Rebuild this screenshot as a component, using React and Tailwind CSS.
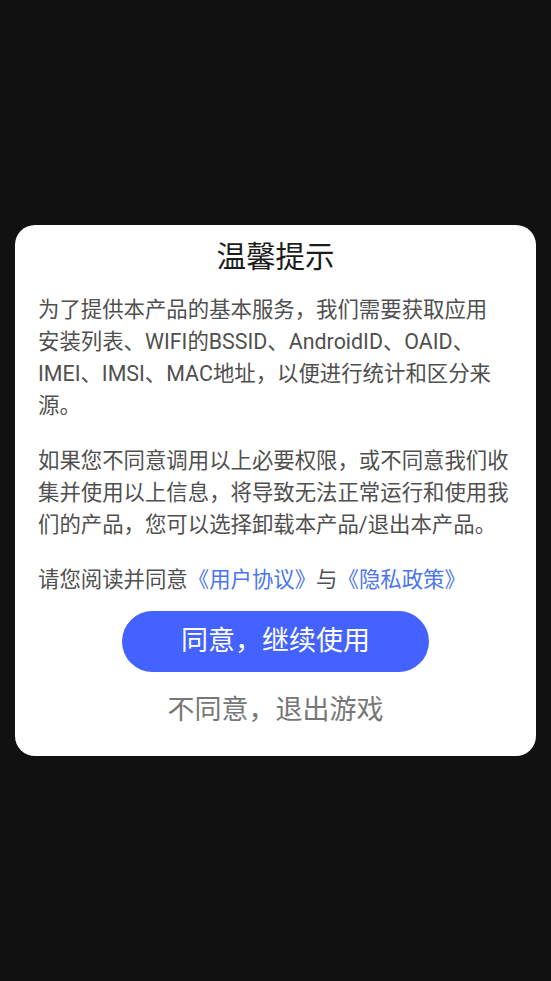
export default function App() {
  return (
    <div
      className="flex min-h-[981px] w-full flex-col bg-[#111111] pt-[225px]"
      style={{ fontFamily: 'Roboto, "Noto Sans CJK SC", sans-serif' }}
    >
      <div className="mx-[15px] flex flex-col rounded-[20px] bg-white px-[23px] pb-[28px] pt-[12px]">
        <h1 className="text-center text-[29.5px] leading-[40px] text-[#1c1c1c]">
          温馨提示
        </h1>

        <div className="mt-[17px] flex flex-col gap-[23px] text-[21.4px] leading-[32px] text-[#505050]">
          <p>
            为了提供本产品的基本服务，我们需要获取应用
            <br />
            安装列表、WIFI的BSSID、AndroidID、OAID、IMEI、IMSI、MAC地址，以便进行统计和区分来源。
          </p>
          <p>
            如果您不同意调用以上必要权限，或不同意我们收集并使用以上信息，将导致无法正常运行和使用我们的产品，您可以选择卸载本产品/退出本产品。
          </p>
          <p>
            请您阅读并同意
            <span className="text-[#4a74f2]">《用户协议》</span>与
            <span className="text-[#4a74f2]">《隐私政策》</span>
          </p>
        </div>

        <button className="mx-auto mt-[15px] h-[61px] w-[307px] rounded-full bg-[#4462ff] text-[27px] text-white">
          同意，继续使用
        </button>

        <button className="mx-auto mt-[20px] text-[27px] leading-[36px] text-[#777777]">
          不同意，退出游戏
        </button>
      </div>
    </div>
  );
}
